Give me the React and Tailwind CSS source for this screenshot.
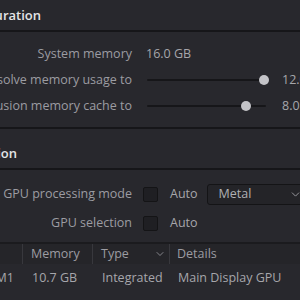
import { ChevronDown } from "lucide-react"

function Label({ children }) {
  return (
    <div className="w-[132px] shrink-0 flex justify-end whitespace-nowrap text-[#9c9ca2]">
      {children}
    </div>
  )
}

function Slider({ pos }) {
  return (
    <div className="relative w-[119px] h-[10px] flex items-center shrink-0">
      <div className="w-full h-[2px] bg-[#161619] rounded-full" />
      <div
        className="absolute top-0 w-[10px] h-[10px] rounded-full bg-[#c4c4c8]"
        style={{ left: `${pos}px` }}
      />
    </div>
  )
}

function Checkbox() {
  return <div className="w-[15px] h-[15px] shrink-0 rounded-[2px] bg-[#1f1f23] border border-[#141416]" />
}

function SectionHeader({ title, edge, height }) {
  return (
    <div className={`flex items-end pb-[5px] ${height}`}>
      <div className={`${edge} flex justify-end whitespace-nowrap text-[13px] font-semibold text-[#e4e4e6]`}>
        {title}
      </div>
    </div>
  )
}

export default function App() {
  return (
    <div className="w-[300px] h-[300px] overflow-hidden bg-[#28282d] text-[12.5px] font-['Open_Sans',sans-serif]">
      <SectionHeader title="Memory Configuration" edge="w-[41px]" height="h-[30px]" />
      <div className="h-[2px] bg-[#161619]" />

      <div className="pt-[9px] pb-[8px]">
        <div className="h-[26px] flex items-center">
          <Label>System memory</Label>
          <span className="ml-[14px] whitespace-nowrap text-[#a6a6ab]">16.0 GB</span>
        </div>
        <div className="h-[26px] flex items-center">
          <Label>Limit Resolve memory usage to</Label>
          <div className="ml-[15px]"><Slider pos={112} /></div>
          <span className="ml-[16px] whitespace-nowrap text-[#a6a6ab]">12.0 GB</span>
        </div>
        <div className="h-[26px] flex items-center">
          <Label>Limit Fusion memory cache to</Label>
          <div className="ml-[15px]"><Slider pos={94} /></div>
          <span className="ml-[16px] whitespace-nowrap text-[#a6a6ab]">8.0 GB</span>
        </div>
      </div>

      <div className="h-[2px] bg-[#161619]" />
      <SectionHeader title="GPU Configuration" edge="w-[17px]" height="h-[39px]" />
      <div className="h-[2px] bg-[#161619]" />

      <div className="pt-[11px]">
        <div className="h-[27px] flex items-center">
          <Label>GPU processing mode</Label>
          <div className="ml-[11px]"><Checkbox /></div>
          <span className="ml-[12px] text-[#a6a6ab]">Auto</span>
          <div className="ml-[9px] w-[110px] h-[21px] shrink-0 flex items-center justify-between pl-[11px] pr-[14px] rounded-[3px] border border-[#141416] bg-[#242428] text-[#b0b0b4]">
            <span>Metal</span>
            <ChevronDown size={13} strokeWidth={1.6} className="text-[#a6a6ab]" />
          </div>
        </div>
        <div className="h-[30px] flex items-center">
          <Label>GPU selection</Label>
          <div className="ml-[11px]"><Checkbox /></div>
          <span className="ml-[12px] text-[#a6a6ab]">Auto</span>
        </div>
      </div>

      <div className="mt-[4px] border-t-2 border-[#1b1b1e]">
        <div className="h-[20px] flex items-center bg-[#252529] text-[#9c9ca2]">
          <div className="w-[23px] h-full border-r border-[#38383d]" />
          <div className="w-[70px] h-full flex items-center pl-[8px] border-r border-[#38383d]">Memory</div>
          <div className="w-[77px] h-full flex items-center justify-between pl-[8px] pr-[3px] border-r border-[#38383d]">
            <span>Type</span>
            <ChevronDown size={12} strokeWidth={1.6} />
          </div>
          <div className="flex-1 pl-[7px]">Details</div>
        </div>
        <div className="h-[26px] pt-[3px] flex items-center text-[#a6a6ab] whitespace-nowrap">
          <div className="w-[23px] flex justify-end pr-[9px]">Apple M1</div>
          <div className="w-[70px] pl-[9px]">10.7 GB</div>
          <div className="w-[77px] pl-[9px]">Integrated</div>
          <div className="flex-1 pl-[8px]">Main Display GPU</div>
        </div>
      </div>
    </div>
  )
}
